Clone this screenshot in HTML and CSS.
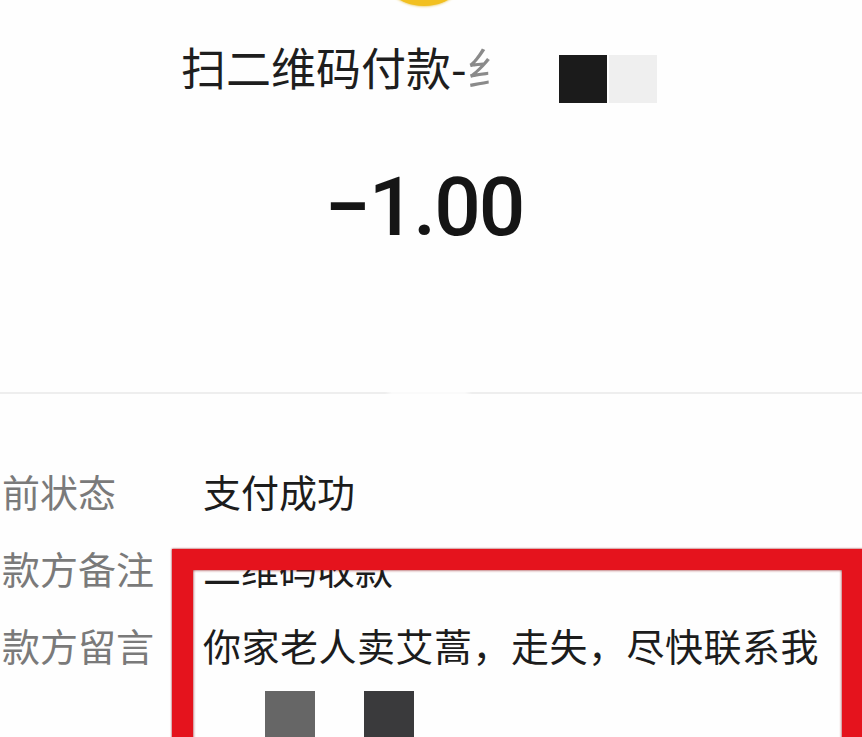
FILE: index.html
```html
<!DOCTYPE html>
<html lang="zh-CN">
<head>
  <meta charset="UTF-8" />
  <meta name="viewport" content="width=device-width, initial-scale=1.0"/>
  <title>账单详情</title>
  <link rel="stylesheet" href="styles.css">
</head>
<body>
  <header class="bill-head">
    <div class="avatar"></div>
    <div class="bill-title">
      <span class="title-text">扫二维码付款-<span class="fade">纟</span></span>
      <span class="mosaic">
        <i class="blk dark"></i><i class="blk light"></i>
      </span>
    </div>
    <div class="amount">−1.00</div>
  </header>
  <div class="divider"></div>
  <section class="detail">
    <div class="row">
      <span class="label">前状态</span>
      <span class="value">支付成功</span>
    </div>
    <div class="row">
      <span class="label">款方备注</span>
      <span class="value">二维码收款</span>
    </div>
    <div class="row">
      <span class="label">款方留言</span>
      <span class="value msg">你家老人卖艾蒿，走失，尽快联系我</span>
    </div>
    <div class="mosaic-row">
      <i class="blk mid"></i><i class="blk dark2"></i>
    </div>
    <!-- 标注框 -->
    <div class="mark-box"></div>
  </section>
</body>
</html>
```

FILE: styles.css
```css
body {
  margin: 0;
  background: #fefefe;
  color: #1c1c1c;
  font-family: 'Noto Sans CJK SC', 'Noto Sans', sans-serif;
  overflow: hidden;
}
.bill-head {
  display: flow-root;
  padding-right: 14px;
  text-align: center;
}
.avatar {
  width: 100px;
  height: 100px;
  margin: -94px auto 0 auto;
  border-radius: 50%;
  background: #f2c020;
  box-shadow: 0 0 3px #e0b21a;
}
.bill-title {
  display: flex;
  justify-content: center;
  align-items: flex-start;
  margin-top: 38px;
  margin-right: 10px;
}
.title-text {
  display: inline-block;
  width: 328px;
  white-space: nowrap;
  text-align: left;
  font-size: 45px;
  line-height: 1;
  color: #1e1e1e;
}
.fade {
  color: #8a8a8a;
  -webkit-mask-image: linear-gradient(to right, #000 45%, transparent 90%);
  mask-image: linear-gradient(to right, #000 45%, transparent 90%);
}
.mosaic {
  display: flex;
  margin-left: 50px;
  margin-top: 11px;
}
.blk {
  display: block;
  width: 48px;
  height: 48px;
}
.mosaic .blk + .blk { margin-left: 2px; }
.blk.dark { background: #1b1b1b; }
.blk.light { background: #efefef; }
.amount {
  margin-top: 63px;
  font-family: Roboto, 'Liberation Sans', sans-serif;
  font-weight: 500;
  font-size: 82px;
  letter-spacing: -2px;
  line-height: 1;
  color: #151515;
}
.divider {
  height: 2px;
  margin-top: 144px;
  background: linear-gradient(to right, #eeeeee 385px, #fafafa 392px, #fafafa 465px, #eeeeee 472px);
}
.detail {
  position: relative;
  padding: 78px 0 0 2px;
}
.row {
  display: flex;
  font-size: 38px;
  line-height: 1;
  margin-bottom: 39px;
}
.label {
  width: 201px;
  color: #7a7a7a;
  flex: none;
}
.value {
  color: #1c1c1c;
  white-space: nowrap;
}
.msg { letter-spacing: 0.5px; }
.mosaic-row {
  display: flex;
  gap: 49px;
  margin-top: -12px;
  padding-left: 263px;
}
.mosaic-row .blk {
  width: 50px;
  height: 50px;
}
.blk.mid { background: #666666; }
.blk.dark2 { background: #3a3a3c; }
.mark-box {
  position: absolute;
  left: 172px;
  top: 155px;
  width: 691px;
  height: 320px;
  box-sizing: border-box;
  border: 21px solid #e5131d;
  box-shadow: 0 0 2px #8c0a10, inset 0 0 3px #8c0a10;
  pointer-events: none;
}
```
